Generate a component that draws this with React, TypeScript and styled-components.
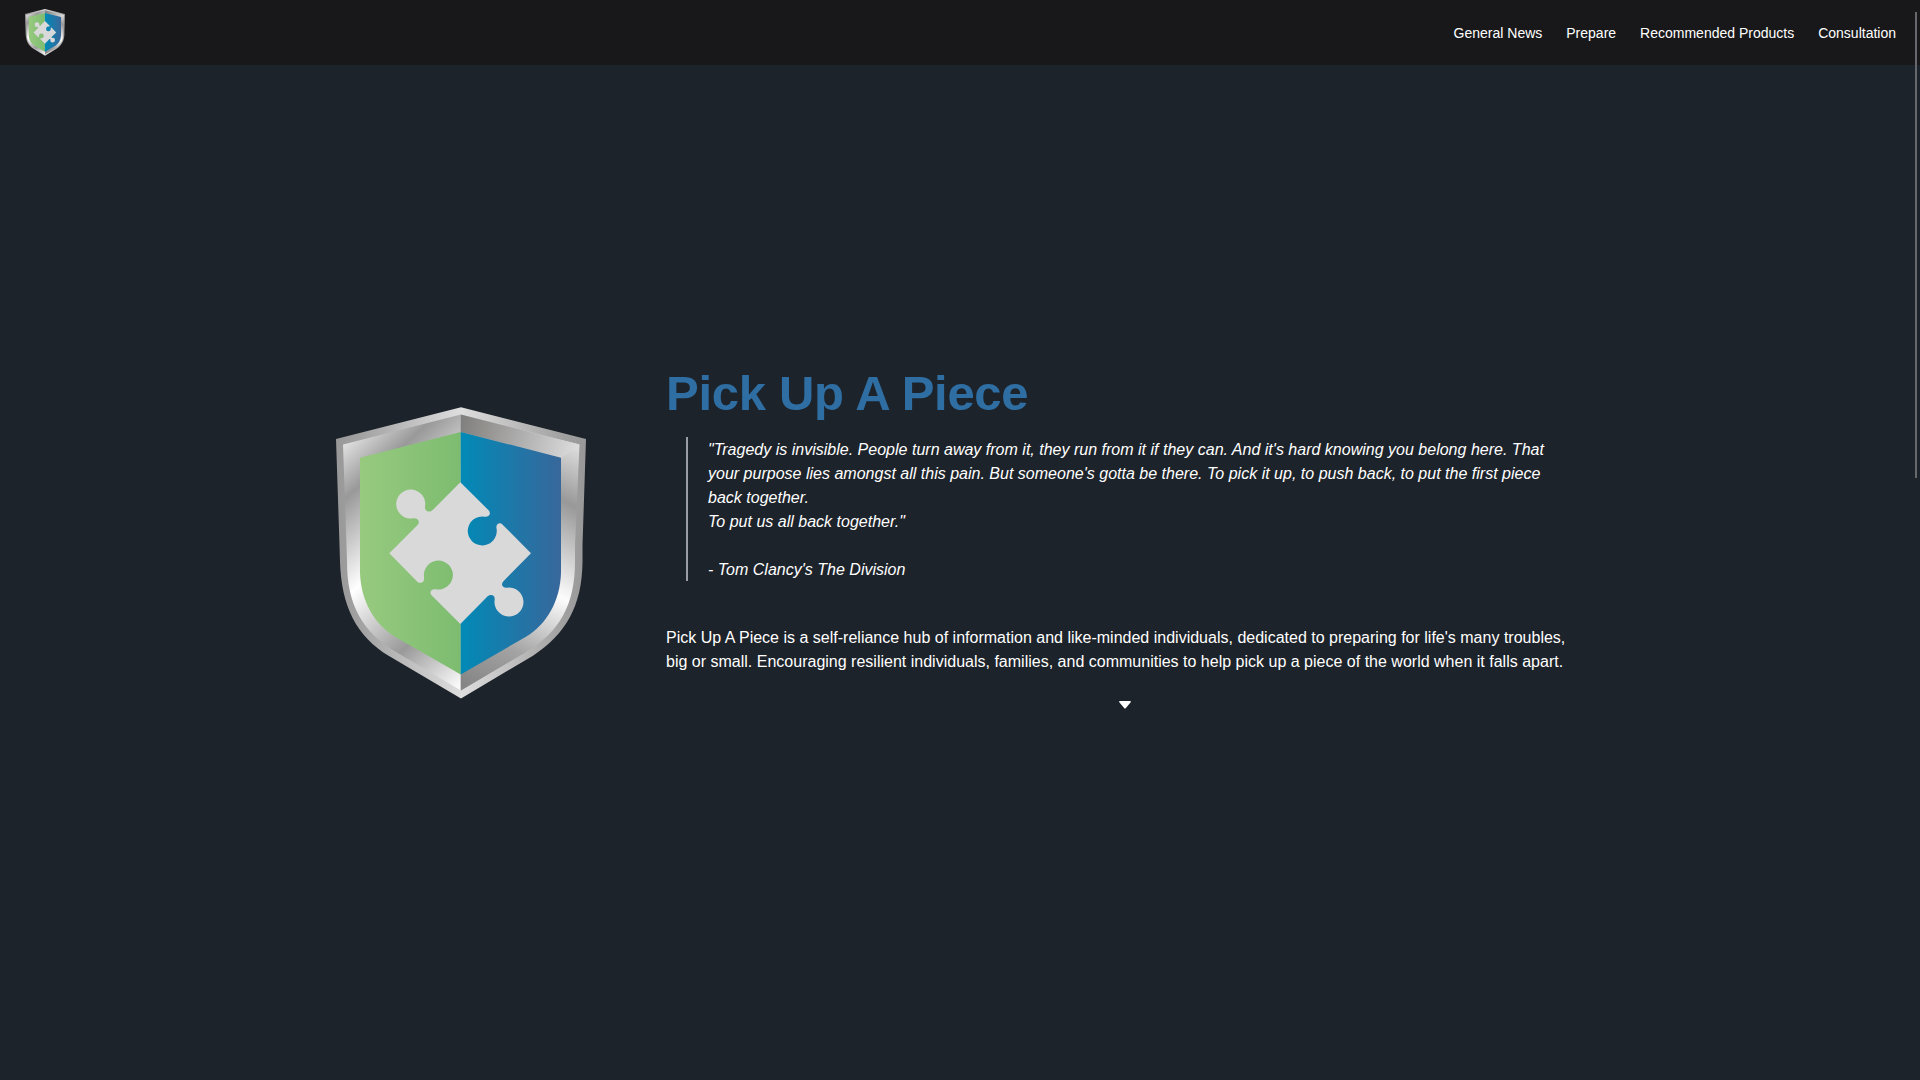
import React, { useId } from "react";
import styled, { createGlobalStyle } from "styled-components";

const GlobalStyle = createGlobalStyle`
  *, *::before, *::after { box-sizing: border-box; }
  body {
    margin: 0;
    background: #1d232a;
    color: #fff;
    font-family: "Liberation Sans", Arial, sans-serif;
    font-size: 16px;
    line-height: 24px;
    overflow: hidden;
  }
`;

const Page = styled.div`
  display: flex;
  flex-direction: column;
  height: 1080px;
`;

const Header = styled.header`
  display: flex;
  align-items: center;
  justify-content: space-between;
  height: 65px;
  padding: 0 24px 0 25px;
  background: #18181a;
`;

const Nav = styled.nav`
  display: flex;
  gap: 24px;
`;

const NavLink = styled.a`
  color: #fff;
  font-size: 14px;
  line-height: 20px;
  text-decoration: none;
  cursor: pointer;
`;

const Hero = styled.main`
  display: flex;
  justify-content: center;
  align-items: center;
  gap: 80px;
  width: 1248px;
  height: 380px;
  margin: 298px auto 0;
`;

const Shield = styled.svg<{ $width: number }>`
  display: block;
  flex: none;
  width: ${(p) => p.$width}px;
  height: auto;
`;

const Copy = styled.section`
  display: flex;
  flex-direction: column;
  width: 918px;
  height: 380px;
`;

const Title = styled.h1`
  margin: 0 0 14px;
  color: #2f6ea3;
  font-size: 49px;
  font-weight: 700;
  letter-spacing: -0.3px;
  line-height: 60px;
`;

const Quote = styled.blockquote`
  margin: 0 20px 43px;
  padding: 1px 0 0 20px;
  height: 144px;
  border-left: 2px solid #9b9da6;
  font-style: italic;
  letter-spacing: 0.008px;
`;

const Intro = styled.p`
  margin: 2px 0 27px;
  letter-spacing: 0.005px;
`;

const Caret = styled.svg`
  display: block;
  align-self: center;
  width: 12px;
  height: 8px;
`;

const ScrollThumb = styled.div`
  position: fixed;
  top: 12px;
  right: 3px;
  width: 2px;
  height: 466px;
  background: #66686d;
`;

const RING =
  "M461 414.5 L579.5 444.5 L575 545 V562 C575 604 560 632 526 652 L461 690.5 L396 652 C362 632 347 604 347 562 L346.5 545 L343 444.5 Z";

function ShieldLogo({ width }: { width: number }) {
  const id = useId().replace(/[^a-zA-Z0-9]/g, "");
  const ref = (name: string) => `url(#${id}${name})`;
  return (
    <Shield $width={width} viewBox="336 407 250 291.5" role="img" aria-label="Pick Up A Piece">
      <defs>
        <linearGradient id={`${id}rim`} gradientUnits="userSpaceOnUse" x1="336" y1="0" x2="586" y2="0">
          <stop offset="0" stopColor="#989898" />
          <stop offset="0.1" stopColor="#a2a2a2" />
          <stop offset="0.5" stopColor="#dedede" />
          <stop offset="0.9" stopColor="#a2a2a2" />
          <stop offset="1" stopColor="#989898" />
        </linearGradient>
        <linearGradient id={`${id}left`} gradientUnits="userSpaceOnUse" x1="343" y1="445" x2="515" y2="635">
          <stop offset="0" stopColor="#e0e0e0" />
          <stop offset="0.16" stopColor="#999" />
          <stop offset="0.45" stopColor="#fff" />
          <stop offset="0.75" stopColor="#999" />
          <stop offset="1" stopColor="#fafafa" />
        </linearGradient>
        <linearGradient id={`${id}right`} gradientUnits="userSpaceOnUse" x1="578" y1="446" x2="459" y2="682">
          <stop offset="0" stopColor="#dedede" />
          <stop offset="0.21" stopColor="#989898" />
          <stop offset="0.54" stopColor="#fcfcfc" />
          <stop offset="0.8" stopColor="#a3a3a3" />
          <stop offset="1" stopColor="#858585" />
        </linearGradient>
        <linearGradient id={`${id}top`} gradientUnits="userSpaceOnUse" x1="461" y1="420" x2="579" y2="450">
          <stop offset="0" stopColor="#7f7f7f" />
          <stop offset="0.2" stopColor="#93918e" />
          <stop offset="0.5" stopColor="#adadad" />
          <stop offset="1" stopColor="#dedede" />
        </linearGradient>
        <linearGradient id={`${id}green`} gradientUnits="userSpaceOnUse" x1="360" y1="0" x2="461" y2="0">
          <stop offset="0" stopColor="#97ca7f" />
          <stop offset="1" stopColor="#7dbc70" />
        </linearGradient>
        <linearGradient id={`${id}blue`} gradientUnits="userSpaceOnUse" x1="461" y1="0" x2="561" y2="0">
          <stop offset="0.05" stopColor="#0488b5" />
          <stop offset="1" stopColor="#38679b" />
        </linearGradient>
        <clipPath id={`${id}leftHalf`}>
          <path d="M336 400 H460.7 V700 H336 Z" />
        </clipPath>
        <clipPath id={`${id}rightHalf`}>
          <path d="M460.7 400 H590 V700 H460.7 Z" />
        </clipPath>
      </defs>
      <path
        fill={ref("rim")}
        d="M461 407.3 L586 439 L582.5 545 V562 C582 606 566 634 533 655.7 L461 698.5 L389 656 C356 636 341.500 606 340 562 L339.500 545 L336 439 Z"
      />
      <path fill={ref("left")} clipPath={ref("leftHalf")} d={RING} />
      <path fill={ref("right")} clipPath={ref("rightHalf")} d={RING} />
      <path fill={ref("top")} d="M460.7 414.5 L579.5 444.5 L561 458 L460.7 432 Z" />
      <path fill={ref("green")} d="M460.7 432 L360 457.700 V573 C361 601 374 624 395 636.700 L460.7 674.500 Z" />
      <path fill={ref("blue")} d="M460.7 432 L561 457.700 V573 C560 601 547 624 526 636.700 L460.7 674.500 Z" />
      <path
        transform="translate(380 475) scale(0.33333)"
        fill="#d9d9d9"
        d="M241 22 L326 106 Q332 113 328 120 Q325 126 314 125 A43.500 43.500 0 1 0 350 163 Q347 150 354 146 Q361 142 368 149 L453 235 L371 318 Q364 325 367 332 Q371 339 380 338 A43.500 43.500 0 1 1 344 374 Q345 364 338 361 Q330 358 323 364 L241 447 L154 360 Q149 353 153 347 Q157 341 167 343 A43.500 43.500 0 1 0 132 306 Q134 318 127 322 Q119 326 112 320 L28 235 L112 151 Q119 144 115 136 Q111 129 100 130 A43.500 43.500 0 1 1 135 95 Q134 105 142 109 Q151 112 159 104 Z"
      />
    </Shield>
  );
}

const links = ["General News", "Prepare", "Recommended Products", "Consultation"];

export default function App() {
  return (
    <Page>
      <GlobalStyle />
      <Header>
        <ShieldLogo width={40} />
        <Nav>
          {links.map((label) => (
            <NavLink key={label}>{label}</NavLink>
          ))}
        </Nav>
      </Header>
      <Hero>
        <ShieldLogo width={250} />
        <Copy>
          <Title>Pick Up A Piece</Title>
          <Quote>
            "Tragedy is invisible. People turn away from it, they run from it if they can. And it's hard knowing you
            belong here. That your purpose lies amongst all this pain. But someone's gotta be there. To pick it up, to
            push back, to put the first piece back together.
            <br />
            To put us all back together."
            <br />
            <br />- Tom Clancy's The Division
          </Quote>
          <Intro>
            Pick Up A Piece is a self-reliance hub of information and like-minded individuals, dedicated to preparing
            for life's many troubles, big or small. Encouraging resilient individuals, families, and communities to
            help pick up a piece of the world when it falls apart.
          </Intro>
          <Caret viewBox="0 0 12 8" aria-hidden="true">
            <path d="M0.800 0 H11.200 Q12.400 0.500 11.500 1.500 L6.900 7 Q6 8 5.100 7 L0.500 1.500 Q-0.400 0.500 0.800 0 Z" fill="#fff" />
          </Caret>
        </Copy>
      </Hero>
      <ScrollThumb />
    </Page>
  );
}
